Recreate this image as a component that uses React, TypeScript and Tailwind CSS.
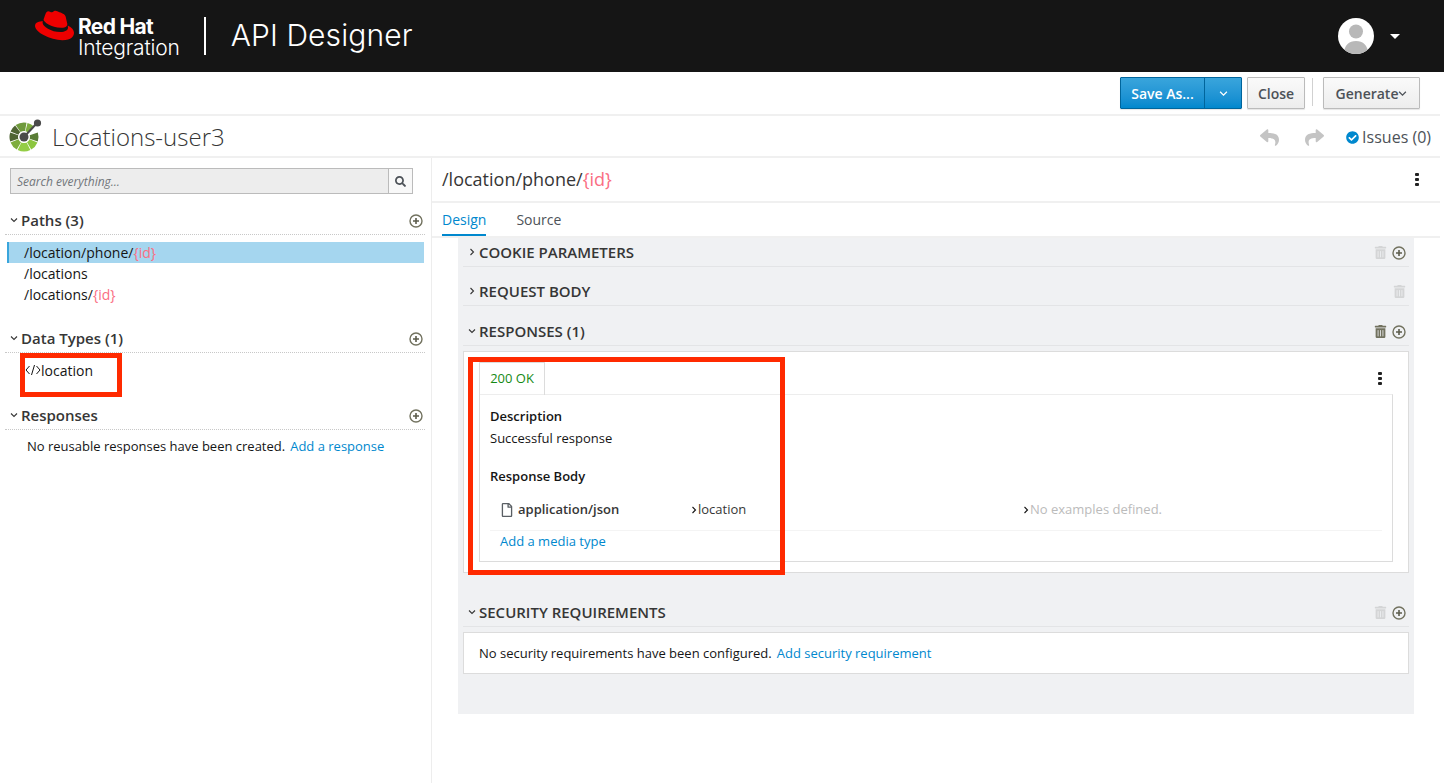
import { ReactNode } from "react";
import { FaCheckCircle, FaRegFile, FaReply, FaSearch, FaShare, FaTrashAlt } from "react-icons/fa";
import { SiRedhat } from "react-icons/si";

function Chevron({ dir = "down", size = 8 }: { dir?: "down" | "right"; size?: number }) {
    return (
        <svg width={size} height={size} viewBox="0 0 8 8" className="shrink-0">
            <path d={dir === "down" ? "M1 2.5 L4 5.5 L7 2.5" : "M2.5 1 L5.5 4 L2.5 7"} fill="none" stroke="currentColor" strokeWidth="1.1" />
        </svg>
    );
}

function PlusCircle() {
    return (
        <svg width="14" height="14" viewBox="0 0 14 14" className="shrink-0">
            <circle cx="7" cy="7" r="6" fill="none" stroke="#72725f" strokeWidth="1.4" />
            <path d="M7 4v6M4 7h6" stroke="#5c5c4c" strokeWidth="1.6" />
        </svg>
    );
}

function Trash({ active }: { active?: boolean }) {
    return <FaTrashAlt size={13} className={active ? "text-[#72725f]" : "text-[#d4d5d6]"} />;
}

function Kebab() {
    return (
        <div className="flex flex-col gap-[1.5px]">
            <span className="h-[3.5px] w-[4px] rounded-[1px] bg-[#222]" />
            <span className="h-[3.5px] w-[4px] rounded-[1px] bg-[#222]" />
            <span className="h-[3.5px] w-[4px] rounded-[1px] bg-[#222]" />
        </div>
    );
}

// wedge of a ring, angles in degrees clockwise from 12 o'clock
function wedge(from: number, to: number) {
    const p = (a: number, r: number) => {
        const t = (a * Math.PI) / 180;
        return `${(15 + r * Math.sin(t)).toFixed(2)} ${(19 - r * Math.cos(t)).toFixed(2)}`;
    };
    return `M${p(from, 14.5)} A14.5 14.5 0 0 1 ${p(to, 14.5)} L${p(to, 6)} A6 6 0 0 0 ${p(from, 6)} Z`;
}

function ApiLogo() {
    const segs = [
        { a: -35, b: 10, c: "#6f9a3c" },
        { a: 14, b: 42, c: "#7ead3e" },
        { a: 72, b: 108, c: "#5a7d36" },
        { a: 112, b: 150, c: "#8cc63f" },
        { a: 154, b: 206, c: "#94cd45" },
        { a: 210, b: 248, c: "#7ead3e" },
        { a: 252, b: 288, c: "#4f6433" },
        { a: 292, b: 322, c: "#4f6433" },
    ];
    return (
        <svg width="34" height="36" viewBox="0 0 34 36" className="shrink-0">
            {segs.map((s) => (
                <path key={s.a} d={wedge(s.a, s.b)} fill={s.c} />
            ))}
            <path d="M15 19 L28 5" stroke="#4a4a4a" strokeWidth="2" />
            <circle cx="15" cy="19" r="4.5" fill="#4a4a4a" />
            <circle cx="28.5" cy="5" r="3.6" fill="#4a4a4a" />
        </svg>
    );
}

function Avatar() {
    return (
        <svg width="36" height="36" viewBox="0 0 36 36">
            <defs>
                <clipPath id="avatarClip">
                    <circle cx="18" cy="18" r="18" />
                </clipPath>
            </defs>
            <circle cx="18" cy="18" r="18" fill="#fff" />
            <g clipPath="url(#avatarClip)" fill="#b8b8b8">
                <circle cx="18" cy="13.5" r="7" />
                <path d="M6 36c0-9 5-13 12-13s12 4 12 13z" />
            </g>
        </svg>
    );
}

function CodeIcon() {
    return (
        <svg width="16" height="12" viewBox="0 0 16 12" className="shrink-0">
            <path d="M4.5 2 L1 6 L4.5 10 M11.5 2 L15 6 L11.5 10 M9.5 1 L6.5 11" fill="none" stroke="#151515" strokeWidth="1" />
        </svg>
    );
}

function Param() {
    return <span className="text-[#fa6e83]">{"{id}"}</span>;
}

function NavHeader({ label }: { label: string }) {
    return (
        <div className="flex h-[29px] items-center justify-between border-b border-dotted border-[#c8c8c8] pr-[2px] pl-[5px]">
            <div className="flex items-center gap-[3px] text-[15px] font-semibold text-[#363636]">
                <Chevron />
                {label}
            </div>
            <div className="mt-[2px]">
                <PlusCircle />
            </div>
        </div>
    );
}

function Section({ label, open, trash, plus = true, trashActive }: { label: string; open?: boolean; trash?: boolean; plus?: boolean; trashActive?: boolean }) {
    return (
        <div className="flex h-[29px] items-center justify-between border-b border-[#e3e4e6] pr-[1px] pl-[5px]">
            <div className="flex items-center gap-[3px] text-[15px] font-semibold text-[#363636]">
                <Chevron dir={open ? "down" : "right"} />
                {label}
            </div>
            <div className="mt-[1px] flex items-center gap-[5px] pr-[2px]">
                {trash ? <Trash active={trashActive} /> : null}
                {plus ? <PlusCircle /> : null}
            </div>
        </div>
    );
}

function Btn({ children, className }: { children: ReactNode; className?: string }) {
    return (
        <button className={"flex h-[32px] items-center justify-center rounded-[1px] border border-[#bbb] bg-gradient-to-b from-[#fafafa] to-[#ededed] text-[14px] font-semibold text-[#4d5258] shadow-[0_1px_1px_rgba(3,3,3,0.1)] " + (className || "")}>
            {children}
        </button>
    );
}

export default function App() {
    return (
        <div className="relative h-screen w-full overflow-hidden bg-white font-['Open_Sans',sans-serif] text-[13px] text-[#151515]">
            {/* top bar */}
            <header className="flex h-[72px] items-center bg-[#151515] text-white">
                <div className="flex w-[1440px] items-center">
                    <SiRedhat size={39} className="mt-[-22px] ml-[35px] text-[#ee0000]" />
                    <div className="ml-[4px] flex flex-col font-['Inter',sans-serif] leading-[21px]">
                        <span className="mt-[1px] text-[21px] font-bold tracking-[-0.7px]">Red Hat</span>
                        <span className="text-[21px] font-light tracking-[-0.2px]">Integration</span>
                    </div>
                    <div className="mr-[25px] ml-[24px] h-[38px] w-[2px] bg-white" />
                    <span className="mt-[-2px] font-['Inter',sans-serif] text-[30px] font-light tracking-[0.1px]">API Designer</span>
                    <div className="mr-[40px] ml-auto flex items-center gap-[16px]">
                        <Avatar />
                        <span className="h-0 w-0 border-x-[5px] border-t-[5px] border-x-transparent border-t-white" />
                    </div>
                </div>
            </header>

            <div className="w-[1440px]">
                {/* action bar */}
                <div className="flex h-[44px] items-start justify-end border-b-2 border-[#f0f0f0] pt-[5px] pr-[20px]">
                    <button className="flex h-[32px] w-[122px] rounded-[1px] border border-[#00659c] bg-gradient-to-b from-[#39a5dc] to-[#0088ce] text-[14px] font-semibold text-white shadow-[0_1px_1px_rgba(3,3,3,0.1)]">
                        <span className="flex h-full w-[84px] items-center justify-center border-r border-[#00659c]">Save As...</span>
                        <span className="flex h-full flex-1 items-center justify-center">
                            <Chevron size={9} />
                        </span>
                    </button>
                    <Btn className="ml-[5px] w-[58px]">Close</Btn>
                    <div className="mt-[1px] mr-[10px] ml-[7px] h-[28px] w-px bg-[#d1d1d1]" />
                    <Btn className="w-[97px]">
                        Generate
                        <Chevron size={9} />
                    </Btn>
                </div>

                {/* title bar */}
                <div className="flex h-[42px] items-center border-b-2 border-[#f0f0f0] pr-[9px] pl-[9px]">
                    <ApiLogo />
                    <span className="mt-[2px] ml-[9px] text-[24px] font-light leading-none text-[#363636]">Locations-user3</span>
                    <div className="mt-[2px] ml-auto flex items-center text-[#4d5258]">
                        <FaReply size={19} className="text-[#c4c4c4]" />
                        <FaShare size={19} className="ml-[26px] text-[#c4c4c4]" />
                        <FaCheckCircle size={13} className="ml-[22px] text-[#0088ce]" />
                        <span className="ml-[3px] text-[16px] font-normal">Issues (0)</span>
                    </div>
                </div>

                <div className="flex h-[625px]">
                    {/* sidebar */}
                    <aside className="w-[432px] shrink-0 border-r border-[#ededed] pr-[6px] pl-[5px]">
                        <div className="mt-[10px] ml-[5px] flex h-[26px] w-[403px] border border-[#bbb] bg-[#ededed]">
                            <div className="flex flex-1 items-center pt-[1px] pl-[6px] text-[12px] text-[#72767b] italic">Search everything...</div>
                            <div className="flex w-[24px] items-center justify-center border-l border-[#bbb] bg-[#f8f8f8]">
                                <FaSearch size={11} className="text-[#4d5258]" />
                            </div>
                        </div>

                        <div className="mt-[12px]">
                            <NavHeader label="Paths (3)" />
                        </div>
                        <div className="mt-[7px] ml-[2px] text-[14px] leading-[21px]">
                            <div className="mr-[1px] border-l-2 border-[#39a5dc] bg-[#a5d6ef] pl-[15px]">
                                /location/phone/<Param />
                            </div>
                            <div className="pl-[17px]">/locations</div>
                            <div className="pl-[17px]">
                                /locations/<Param />
                            </div>
                        </div>

                        <div className="mt-[19px]">
                            <NavHeader label="Data Types (1)" />
                        </div>
                        <div className="mt-[6px] flex h-[22px] items-center pl-[20px] text-[14px]">
                            <CodeIcon />
                            <span>location</span>
                        </div>

                        <div className="mt-[20px]">
                            <NavHeader label="Responses" />
                        </div>
                        <div className="mt-[6px] pl-[22px] text-[13px] leading-[20px]">
                            No reusable responses have been created.
                            <span className="ml-[5px] text-[#0088ce]">Add a response</span>
                        </div>
                    </aside>

                    {/* main */}
                    <main className="flex-1">
                        <div className="flex h-[45px] items-center justify-between border-b-2 border-[#f0f0f0] pr-[21px] pl-[10px]">
                            <span className="text-[18px] text-[#363636]">
                                /location/phone/<Param />
                            </span>
                            <Kebab />
                        </div>
                        <div className="flex h-[35px] items-end border-b-2 border-[#f0f0f0] pl-[10px] text-[14px]">
                            <span className="h-[35px] border-b-2 border-[#0088ce] pt-[8px] text-[#0088ce]">Design</span>
                            <span className="ml-[30px] h-[35px] pt-[8px] text-[#4d5258]">Source</span>
                        </div>

                        <div className="ml-[26px] h-[476px] w-[956px] bg-[#f0f1f3] px-[5px]">
                            <Section label="COOKIE PARAMETERS" trash />
                            <div className="mt-[10px]">
                                <Section label="REQUEST BODY" trash plus={false} />
                            </div>
                            <div className="mt-[11px]">
                                <Section label="RESPONSES (1)" open trash trashActive />
                            </div>

                            <div className="mt-[5px] h-[222px] border border-[#dcdcdc] bg-white pt-[10px] pr-[15px] pl-[15px]">
                                <div className="flex items-center justify-between">
                                    <div className="flex h-[33px] w-[66px] items-center justify-center border-x border-t border-[#dcdcdc] text-[13px] text-[#158a15]">200 OK</div>
                                    <div className="pr-[11px]">
                                        <Kebab />
                                    </div>
                                </div>
                                <div className="-mt-px h-[168px] border border-[#dcdcdc] border-t-[#ededed] px-[10px] pt-[11px]">
                                    <div className="text-[13px] leading-[20px] font-semibold">Description</div>
                                    <div className="mt-[2px] text-[13px] leading-[20px]">Successful response</div>
                                    <div className="mt-[18px] text-[13px] leading-[20px] font-semibold">Response Body</div>
                                    <div className="mt-[13px] flex h-[32px] items-center border-b border-[#f4f4f4] pl-[10px] pb-[10px] text-[13px]">
                                        <FaRegFile size={14} className="text-[#5a5f64]" />
                                        <span className="ml-[4px] w-[172px] font-semibold text-[#363636]">application/json</span>
                                        <Chevron dir="right" />
                                        <span className="w-[324px] text-[#363636]">location</span>
                                        <Chevron dir="right" />
                                        <span className="text-[#bbb]">No examples defined.</span>
                                    </div>
                                    <div className="pl-[10px] text-[13px] leading-[20px] text-[#0088ce]">Add a media type</div>
                                </div>
                            </div>

                            <div className="mt-[25px]">
                                <Section label="SECURITY REQUIREMENTS" open trash />
                            </div>
                            <div className="mt-[5px] flex h-[42px] items-center border border-[#dcdcdc] bg-white pt-[1px] pl-[15px] text-[13px]">
                                No security requirements have been configured.
                                <span className="ml-[5px] text-[#0088ce]">Add security requirement</span>
                            </div>
                        </div>
                    </main>
                </div>
            </div>

            {/* red callout boxes drawn over the screenshot */}
            <div className="absolute top-[353px] left-[20px] h-[44px] w-[102px] border-[5px] border-[#ff2a00]" />
            <div className="absolute top-[357px] left-[468px] h-[218px] w-[317px] border-[5px] border-[#ff2a00]" />
        </div>
    );
}
